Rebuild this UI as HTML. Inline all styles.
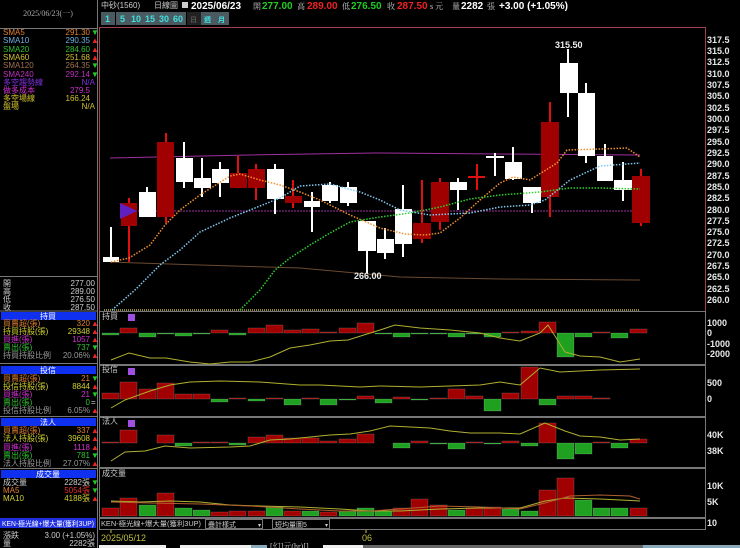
<!DOCTYPE html>
<html><head><meta charset="utf-8"><style>
html,body{margin:0;padding:0;background:#000;width:740px;height:548px;overflow:hidden}
svg{display:block}
text{font-family:"Liberation Sans","Noto Sans CJK TC",sans-serif}
.s{font-family:"Liberation Serif","Noto Serif CJK SC",serif;font-size:8px}
.ax{font-family:"Liberation Serif",serif;font-size:9px;fill:#e8e8e8;font-weight:bold}
</style></head><body>
<svg width="740" height="548" viewBox="0 0 740 548" xmlns="http://www.w3.org/2000/svg">
<rect width="740" height="548" fill="#000"/>
<line x1="97.5" y1="0" x2="97.5" y2="548" stroke="#777" stroke-width="1"/>
<line x1="0" y1="28.5" x2="97" y2="28.5" stroke="#777"/>
<text x="48" y="16" class="s" fill="#aaa" text-anchor="middle">2025/06/23(一)</text>
<g class="s">
<text x="3" y="35" fill="#e08030">SMA5</text><text x="90" y="35" fill="#e08030" text-anchor="end">291.30</text><text x="91" y="35" fill="#2c2">▼</text>
<text x="3" y="43" fill="#70b0e0">SMA10</text><text x="90" y="43" fill="#70b0e0" text-anchor="end">290.35</text><text x="91" y="43" fill="#e22">▲</text>
<text x="3" y="52" fill="#30c030">SMA20</text><text x="90" y="52" fill="#30c030" text-anchor="end">284.60</text><text x="91" y="52" fill="#e22">▲</text>
<text x="3" y="60" fill="#d0c030">SMA60</text><text x="90" y="60" fill="#d0c030" text-anchor="end">251.68</text><text x="91" y="60" fill="#e22">▲</text>
<text x="3" y="68" fill="#a07050">SMA120</text><text x="90" y="68" fill="#a07050" text-anchor="end">264.35</text><text x="91" y="68" fill="#2c2">▼</text>
<text x="3" y="77" fill="#c030c0">SMA240</text><text x="90" y="77" fill="#c030c0" text-anchor="end">292.14</text><text x="91" y="77" fill="#2c2">▼</text>
<text x="3" y="85" fill="#8030e0">多空趨勢線</text><text x="95" y="85" fill="#8030e0" text-anchor="end">N/A</text>
<text x="3" y="93" fill="#d030d0">做多成本</text><text x="90" y="93" fill="#d030d0" text-anchor="end">279.5</text>
<text x="3" y="101" fill="#d0c030">多空場線</text><text x="90" y="101" fill="#d0c030" text-anchor="end">166.24</text>
<text x="3" y="109" fill="#d0c030">盤場</text><text x="95" y="109" fill="#d0c030" text-anchor="end">N/A</text>

<line x1="0" y1="276.5" x2="97" y2="276.5" stroke="#777"/>
<text x="3" y="286" fill="#ccc">開</text><text x="95" y="286" fill="#ccc" text-anchor="end">277.00</text>
<text x="3" y="294" fill="#ccc">高</text><text x="95" y="294" fill="#ccc" text-anchor="end">289.00</text>
<text x="3" y="302" fill="#ccc">低</text><text x="95" y="302" fill="#ccc" text-anchor="end">276.50</text>
<text x="3" y="310" fill="#ccc">收</text><text x="95" y="310" fill="#ccc" text-anchor="end">287.50</text>
<line x1="0" y1="311" x2="97" y2="311" stroke="#777"/>
<rect x="1" y="312" width="95" height="8" fill="#1030f0"/><text x="48" y="319" fill="#fff" text-anchor="middle">持買</text>
<text x="3" y="326" fill="#e08030">買賣超(張)</text><text x="90" y="326" fill="#e08030" text-anchor="end">320</text><text x="91" y="326" fill="#e22">▲</text>
<text x="3" y="334" fill="#d0d030">持買持股(張)</text><text x="90" y="334" fill="#d0d030" text-anchor="end">29348</text><text x="91" y="334" fill="#e22">▲</text>
<text x="3" y="342" fill="#d030d0">買進(張)</text><text x="90" y="342" fill="#d030d0" text-anchor="end">1057</text><text x="91" y="342" fill="#e22">▲</text>
<text x="3" y="350" fill="#30c030">賣出(張)</text><text x="90" y="350" fill="#30c030" text-anchor="end">737</text><text x="91" y="350" fill="#2c2">▼</text>
<text x="3" y="358" fill="#999">持買持股比例</text><text x="90" y="358" fill="#999" text-anchor="end">20.06%</text><text x="91" y="358" fill="#e22">▲</text>
<line x1="0" y1="363.5" x2="97" y2="363.5" stroke="#777"/>
<rect x="1" y="366" width="95" height="8" fill="#1030f0"/><text x="48" y="373" fill="#fff" text-anchor="middle">投信</text>
<text x="3" y="381" fill="#e08030">買賣超(張)</text><text x="90" y="381" fill="#e08030" text-anchor="end">21</text><text x="91" y="381" fill="#2c2">▼</text>
<text x="3" y="389" fill="#d0d030">投信持股(張)</text><text x="90" y="389" fill="#d0d030" text-anchor="end">8844</text><text x="91" y="389" fill="#e22">▲</text>
<text x="3" y="397" fill="#d030d0">買進(張)</text><text x="90" y="397" fill="#d030d0" text-anchor="end">21</text><text x="91" y="397" fill="#2c2">▼</text>
<text x="3" y="405" fill="#30c030">賣出(張)</text><text x="90" y="405" fill="#30c030" text-anchor="end">0</text><text x="91" y="405" fill="#ccc">=</text>
<text x="3" y="413" fill="#999">投信持股比例</text><text x="90" y="413" fill="#999" text-anchor="end">6.05%</text><text x="91" y="413" fill="#e22">▲</text>
<line x1="0" y1="416.5" x2="97" y2="416.5" stroke="#777"/>
<rect x="1" y="418" width="95" height="8" fill="#1030f0"/><text x="48" y="425" fill="#fff" text-anchor="middle">法人</text>
<text x="3" y="433" fill="#e08030">買賣超(張)</text><text x="90" y="433" fill="#e08030" text-anchor="end">337</text><text x="91" y="433" fill="#e22">▲</text>
<text x="3" y="441" fill="#d0d030">法人持股(張)</text><text x="90" y="441" fill="#d0d030" text-anchor="end">39608</text><text x="91" y="441" fill="#e22">▲</text>
<text x="3" y="450" fill="#d030d0">買進(張)</text><text x="90" y="450" fill="#d030d0" text-anchor="end">1118</text><text x="91" y="450" fill="#e22">▲</text>
<text x="3" y="458" fill="#30c030">賣出(張)</text><text x="90" y="458" fill="#30c030" text-anchor="end">781</text><text x="91" y="458" fill="#2c2">▼</text>
<text x="3" y="466" fill="#999">法人持股比例</text><text x="90" y="466" fill="#999" text-anchor="end">27.07%</text><text x="91" y="466" fill="#e22">▲</text>
<line x1="0" y1="468.5" x2="97" y2="468.5" stroke="#777"/>
<rect x="1" y="470" width="95" height="8" fill="#1030f0"/><text x="48" y="477" fill="#fff" text-anchor="middle">成交量</text>
<text x="3" y="485" fill="#ccc">成交量</text><text x="90" y="485" fill="#ccc" text-anchor="end">2282張</text><text x="91" y="485" fill="#2c2">▼</text>
<text x="3" y="493" fill="#e08030">MA5</text><text x="90" y="493" fill="#e03030" text-anchor="end">5054張</text><text x="91" y="493" fill="#2c2">▼</text>
<text x="3" y="501" fill="#d0d030">MA10</text><text x="90" y="501" fill="#d0d030" text-anchor="end">4188張</text><text x="91" y="501" fill="#e22">▲</text>
<rect x="0" y="518" width="96" height="10" fill="#2030e0"/><text x="2" y="526" fill="#fff" font-size="7" textLength="92" lengthAdjust="spacingAndGlyphs">KEN-極光線+爆大量(獲利3UP)</text>
<text x="3" y="538" fill="#ccc">漲跌</text><text x="95" y="538" fill="#ccc" text-anchor="end">3.00 (+1.05%)</text>
<text x="3" y="546" fill="#ccc">量</text><text x="95" y="546" fill="#ccc" text-anchor="end">2282張</text>
</g>
<g class="s">
<text x="101" y="8" fill="#ccc">中砂(1560)</text>
<text x="154" y="8" fill="#ccc">日線圖</text>
<rect x="182" y="2" width="6" height="6" fill="#ccc"/>
</g>
<text x="191" y="9" fill="#fff" font-size="10" font-weight="bold">2025/06/23</text>
<text x="253" y="9" fill="#ccc" class="s">開</text><text x="262" y="9" fill="#2c2" font-size="10" font-weight="bold">277.00</text>
<text x="297" y="9" fill="#ccc" class="s">高</text><text x="307" y="9" fill="#e22" font-size="10" font-weight="bold">289.00</text>
<text x="342" y="9" fill="#ccc" class="s">低</text><text x="351" y="9" fill="#2c2" font-size="10" font-weight="bold">276.50</text>
<text x="387" y="9" fill="#ccc" class="s">收</text><text x="397" y="9" fill="#e22" font-size="10" font-weight="bold">287.50</text>
<text x="430" y="9" fill="#ccc" class="s">s 元</text>
<text x="452" y="9" fill="#ccc" class="s">量</text><text x="461" y="9" fill="#fff" font-size="10" font-weight="bold">2282</text>
<text x="487" y="9" fill="#ccc" class="s">張</text><text x="499" y="9" fill="#fff" font-size="10" font-weight="bold">+3.00 (+1.05%)</text>
<g font-size="9" fill="#40e0e0" font-family="Liberation Serif,serif" font-weight="bold">
<rect x="101" y="12" width="14" height="13" fill="#4a5a60"/><text x="105" y="22">1</text>
<rect x="116" y="12" width="14" height="13" fill="#4a5a60"/><text x="120" y="22">5</text>
<rect x="130" y="12" width="14" height="13" fill="#4a5a60"/><text x="131" y="22">10</text>
<rect x="144" y="12" width="14" height="13" fill="#4a5a60"/><text x="145" y="22">15</text>
<rect x="158" y="12" width="14" height="13" fill="#4a5a60"/><text x="159" y="22">30</text>
<rect x="172" y="12" width="14" height="13" fill="#4a5a60"/><text x="173" y="22">60</text>
<rect x="187" y="12" width="14" height="13" fill="#222"/><text x="190" y="22" fill="#555" font-size="7">日</text>
<rect x="201" y="12" width="14" height="13" fill="#4a5a60"/><text x="204" y="22" font-size="7">週</text>
<rect x="215" y="12" width="14" height="13" fill="#4a5a60"/><text x="218" y="22" font-size="7">月</text>
</g>
<rect x="99.5" y="27.5" width="606" height="284" fill="none" stroke="#a04050"/>
<g class="ax">
<text x="707" y="43">317.5</text><text x="707" y="54">315.0</text><text x="707" y="65">312.5</text><text x="707" y="77">310.0</text><text x="707" y="88">307.5</text><text x="707" y="99">305.0</text><text x="707" y="111">302.5</text><text x="707" y="122">300.0</text><text x="707" y="133">297.5</text><text x="707" y="145">295.0</text><text x="707" y="156">292.5</text><text x="707" y="167">290.0</text><text x="707" y="179">287.5</text><text x="707" y="190">285.0</text><text x="707" y="201">282.5</text><text x="707" y="213">280.0</text><text x="707" y="224">277.5</text><text x="707" y="235">275.0</text><text x="707" y="246">272.5</text><text x="707" y="258">270.0</text><text x="707" y="269">267.5</text><text x="707" y="280">265.0</text><text x="707" y="292">262.5</text><text x="707" y="303">260.0</text>
</g>
<polyline points="110,158 250,155 375,153 500,154 640,155" fill="none" stroke="#a030a0" stroke-width="1"/>
<line x1="120" y1="211" x2="640" y2="211" stroke="#a030a0" stroke-width="1" stroke-dasharray="2,1"/>
<polyline points="110,262 200,265 300,268 400,277 500,279 640,280" fill="none" stroke="#6a4a30" stroke-width="1"/>
<line x1="104" y1="310" x2="640" y2="310" stroke="#c0b040" stroke-width="1.5" stroke-dasharray="1,1"/>
<g stroke-width="2">
<line x1="111" y1="227" x2="111" y2="262" stroke="#fff"/><rect x="103" y="257" width="16" height="5" fill="#fff"/>
<line x1="129" y1="198" x2="129" y2="262" stroke="#e01010"/><rect x="121" y="203" width="16" height="23" fill="#a00000"/>
<line x1="147" y1="187" x2="147" y2="217" stroke="#fff"/><rect x="139" y="192" width="17" height="25" fill="#fff"/>
<line x1="166" y1="133" x2="166" y2="223" stroke="#e01010"/><rect x="157" y="142" width="17" height="75" fill="#a00000"/>
<line x1="184" y1="142" x2="184" y2="188" stroke="#fff"/><rect x="176" y="158" width="17" height="24" fill="#fff"/>
<line x1="202" y1="158" x2="202" y2="197" stroke="#fff"/><rect x="194" y="178" width="17" height="10" fill="#fff"/>
<line x1="220" y1="162" x2="220" y2="197" stroke="#fff"/><rect x="212" y="169" width="17" height="14" fill="#fff"/>
<line x1="238" y1="156" x2="238" y2="188" stroke="#e01010"/><rect x="230" y="173" width="17" height="15" fill="#a00000"/>
<line x1="256" y1="164" x2="256" y2="200" stroke="#e01010"/><rect x="248" y="169" width="17" height="19" fill="#a00000"/>
<line x1="275" y1="164" x2="275" y2="214" stroke="#fff"/><rect x="267" y="169" width="17" height="30" fill="#fff"/>
<line x1="293" y1="180" x2="293" y2="208" stroke="#e01010"/><rect x="285" y="196" width="17" height="7" fill="#a00000"/>
<line x1="312" y1="192" x2="312" y2="232" stroke="#fff"/><rect x="304" y="201" width="16" height="6" fill="#fff"/>
<line x1="330" y1="182" x2="330" y2="203" stroke="#fff"/><rect x="322" y="185" width="16" height="16" fill="#fff"/>
<line x1="348" y1="182" x2="348" y2="206" stroke="#fff"/><rect x="340" y="187" width="17" height="16" fill="#fff"/>
<line x1="367" y1="221" x2="367" y2="273" stroke="#fff"/><rect x="358" y="221" width="18" height="30" fill="#fff"/>
<line x1="385" y1="228" x2="385" y2="259" stroke="#fff"/><rect x="377" y="239" width="17" height="14" fill="#fff"/>
<line x1="403" y1="185" x2="403" y2="257" stroke="#fff"/><rect x="395" y="209" width="17" height="35" fill="#fff"/>
<line x1="422" y1="180" x2="422" y2="243" stroke="#e01010"/><rect x="413" y="223" width="18" height="16" fill="#a00000"/>
<line x1="440" y1="178" x2="440" y2="230" stroke="#e01010"/><rect x="431" y="182" width="18" height="40" fill="#a00000"/>
<line x1="458" y1="178" x2="458" y2="210" stroke="#fff"/><rect x="450" y="182" width="17" height="8" fill="#fff"/>
<line x1="477" y1="164" x2="477" y2="190" stroke="#e01010"/><rect x="468" y="176" width="17" height="2" fill="#e01010"/>
<line x1="495" y1="153" x2="495" y2="176" stroke="#fff"/><rect x="486" y="156" width="18" height="2" fill="#fff"/>
<line x1="513" y1="147" x2="513" y2="180" stroke="#fff"/><rect x="505" y="162" width="17" height="17" fill="#fff"/>
<line x1="532" y1="187" x2="532" y2="213" stroke="#fff"/><rect x="523" y="187" width="18" height="16" fill="#fff"/>
<line x1="550" y1="102" x2="550" y2="217" stroke="#e01010"/><rect x="541" y="122" width="18" height="75" fill="#a00000"/>
<line x1="568" y1="49" x2="568" y2="117" stroke="#fff"/><rect x="560" y="63" width="18" height="30" fill="#fff"/>
<line x1="586" y1="83" x2="586" y2="163" stroke="#fff"/><rect x="578" y="93" width="17" height="63" fill="#fff"/>
<line x1="605" y1="144" x2="605" y2="181" stroke="#fff"/><rect x="597" y="156" width="16" height="25" fill="#fff"/>
<line x1="623" y1="162" x2="623" y2="201" stroke="#fff"/><rect x="614" y="180" width="18" height="10" fill="#fff"/>
<line x1="641" y1="169" x2="641" y2="226" stroke="#e01010"/><rect x="632" y="176" width="18" height="47" fill="#a00000"/>
</g>
<polygon points="120,203 120,219 137,211" fill="#6020c0"/>
<text x="555" y="48" fill="#eee" font-size="9" font-family="Liberation Sans,sans-serif" font-weight="bold">315.50</text>
<text x="354" y="279" fill="#eee" font-size="9" font-family="Liberation Sans,sans-serif" font-weight="bold">266.00</text>
<polyline points="111,262 129,258 150,245 165,225 180,210 200,195 230,176 240,174 260,180 280,185 300,192 320,200 350,215 380,228 405,234 425,235 440,233 460,218 480,200 500,183 513,177 530,180 557,163 567,150 600,149 627,148 640,157" fill="none" stroke="#f09030" stroke-width="1.5" stroke-dasharray="1.5,1.5"/>
<polyline points="112,310 135,290 160,265 180,250 200,232 230,218 250,210 280,198 300,186 330,184 360,192 380,200 400,210 430,215 470,213 500,207 530,205 545,200 570,180 600,166 640,163" fill="none" stroke="#80c8f0" stroke-width="1.5" stroke-dasharray="1.5,1.5"/>
<polyline points="240,310 260,290 275,270 290,258 310,245 330,233 350,222 380,217 410,213 440,207 470,199 500,195 540,192 570,188 600,188 640,189" fill="none" stroke="#30d030" stroke-width="1.5" stroke-dasharray="1.5,1.5"/>
<g fill="none" stroke="#777">
<rect x="99.5" y="311.5" width="606" height="53"/>
<rect x="99.5" y="365.5" width="606" height="51"/>
<rect x="99.5" y="417.5" width="606" height="50"/>
<rect x="99.5" y="468.5" width="606" height="49"/>
<rect x="99.5" y="518.5" width="606" height="11"/>
</g>
<g class="s" fill="#ccc">
<text x="102" y="319">持買</text><text x="102" y="372">投信</text><text x="102" y="424">法人</text><text x="102" y="476">成交量</text>
</g>
<rect x="128" y="314" width="7" height="7" fill="#a050e0"/>
<rect x="128" y="368" width="7" height="7" fill="#a050e0"/>
<rect x="128" y="420" width="7" height="7" fill="#a050e0"/>
<g class="ax">
<text x="707" y="326">1000</text><text x="707" y="336">0</text><text x="707" y="347">-1000</text><text x="707" y="357">-2000</text>
<text x="707" y="386">500</text><text x="707" y="402">0</text>
<text x="707" y="438">40K</text><text x="707" y="454">38K</text>
<text x="707" y="489">10K</text><text x="707" y="505">5K</text>
<text x="707" y="526">10</text>
</g>
<g stroke="#fff" stroke-opacity="0.15">
<rect x="102" y="333" width="17" height="2" fill="#20a020"/>
<rect x="120" y="328" width="17" height="5" fill="#a00000"/>
<rect x="139" y="333" width="17" height="4" fill="#20a020"/>
<rect x="157" y="333" width="17" height="1" fill="#20a020"/>
<rect x="175" y="333" width="17" height="3" fill="#20a020"/>
<rect x="193" y="333" width="17" height="1" fill="#20a020"/>
<rect x="211" y="330" width="17" height="3" fill="#a00000"/>
<rect x="229" y="333" width="17" height="2" fill="#20a020"/>
<rect x="248" y="328" width="17" height="5" fill="#a00000"/>
<rect x="266" y="325" width="17" height="8" fill="#a00000"/>
<rect x="284" y="330" width="17" height="3" fill="#a00000"/>
<rect x="302" y="329" width="17" height="4" fill="#a00000"/>
<rect x="320" y="332" width="17" height="1" fill="#a00000"/>
<rect x="339" y="328" width="17" height="5" fill="#a00000"/>
<rect x="357" y="323" width="17" height="10" fill="#a00000"/>
<rect x="375" y="333" width="17" height="1" fill="#20a020"/>
<rect x="393" y="333" width="17" height="4" fill="#20a020"/>
<rect x="411" y="333" width="17" height="1" fill="#20a020"/>
<rect x="430" y="333" width="17" height="1" fill="#20a020"/>
<rect x="448" y="333" width="17" height="4" fill="#20a020"/>
<rect x="466" y="333" width="17" height="1" fill="#20a020"/>
<rect x="484" y="333" width="17" height="4" fill="#20a020"/>
<rect x="502" y="332" width="17" height="1" fill="#a00000"/>
<rect x="521" y="331" width="17" height="2" fill="#a00000"/>
<rect x="539" y="322" width="17" height="11" fill="#a00000"/>
<rect x="557" y="333" width="17" height="24" fill="#20a020"/>
<rect x="575" y="333" width="17" height="4" fill="#20a020"/>
<rect x="593" y="332" width="17" height="1" fill="#a00000"/>
<rect x="611" y="333" width="17" height="5" fill="#20a020"/>
<rect x="630" y="329" width="17" height="4" fill="#a00000"/>
</g>
<polyline points="111,360 129,353 150,358 166,358 190,362 210,364 230,362 250,362 270,357 290,348 310,345 330,341 348,340 367,334 380,330 395,325 420,328 450,330 480,333 500,338 520,341 540,333 548,325 565,352 580,356 600,357 620,362 640,359" fill="none" stroke="#b0b030" stroke-width="1"/>
<g stroke="#fff" stroke-opacity="0.15">
<rect x="102" y="393" width="17" height="6" fill="#a00000"/>
<rect x="120" y="382" width="17" height="17" fill="#a00000"/>
<rect x="139" y="389" width="17" height="10" fill="#a00000"/>
<rect x="157" y="383" width="17" height="16" fill="#a00000"/>
<rect x="175" y="394" width="17" height="5" fill="#a00000"/>
<rect x="193" y="394" width="17" height="5" fill="#a00000"/>
<rect x="211" y="399" width="17" height="3" fill="#20a020"/>
<rect x="229" y="398" width="17" height="1" fill="#a00000"/>
<rect x="248" y="399" width="17" height="2" fill="#20a020"/>
<rect x="266" y="398" width="17" height="1" fill="#a00000"/>
<rect x="284" y="399" width="17" height="6" fill="#20a020"/>
<rect x="302" y="398" width="17" height="1" fill="#a00000"/>
<rect x="320" y="399" width="17" height="6" fill="#20a020"/>
<rect x="339" y="399" width="17" height="1" fill="#20a020"/>
<rect x="357" y="396" width="17" height="3" fill="#a00000"/>
<rect x="375" y="399" width="17" height="4" fill="#20a020"/>
<rect x="393" y="397" width="17" height="2" fill="#a00000"/>
<rect x="411" y="399" width="17" height="1" fill="#20a020"/>
<rect x="430" y="398" width="17" height="1" fill="#a00000"/>
<rect x="448" y="389" width="17" height="10" fill="#a00000"/>
<rect x="466" y="396" width="17" height="3" fill="#a00000"/>
<rect x="484" y="399" width="17" height="12" fill="#20a020"/>
<rect x="502" y="393" width="17" height="6" fill="#a00000"/>
<rect x="521" y="367" width="17" height="32" fill="#a00000"/>
<rect x="539" y="399" width="17" height="6" fill="#20a020"/>
<rect x="557" y="396" width="17" height="3" fill="#a00000"/>
<rect x="575" y="396" width="17" height="3" fill="#a00000"/>
<rect x="593" y="398" width="17" height="1" fill="#a00000"/>
</g>
<polyline points="111,408 125,400 150,391 170,385 190,382 220,381 260,382 300,385 320,385 360,387 380,386 420,387 480,385 500,382 520,385 540,368 560,372 600,370 640,369" fill="none" stroke="#b0b030" stroke-width="1"/>
<g stroke="#fff" stroke-opacity="0.15">
<rect x="102" y="442" width="17" height="1" fill="#a00000"/>
<rect x="120" y="430" width="17" height="13" fill="#a00000"/>
<rect x="157" y="435" width="17" height="8" fill="#a00000"/>
<rect x="175" y="443" width="17" height="3" fill="#20a020"/>
<rect x="193" y="442" width="17" height="1" fill="#a00000"/>
<rect x="211" y="442" width="17" height="1" fill="#a00000"/>
<rect x="229" y="443" width="17" height="2" fill="#20a020"/>
<rect x="248" y="437" width="17" height="6" fill="#a00000"/>
<rect x="266" y="435" width="17" height="8" fill="#a00000"/>
<rect x="284" y="438" width="17" height="5" fill="#a00000"/>
<rect x="302" y="438" width="17" height="5" fill="#a00000"/>
<rect x="320" y="441" width="17" height="2" fill="#a00000"/>
<rect x="339" y="439" width="17" height="4" fill="#a00000"/>
<rect x="357" y="434" width="17" height="9" fill="#a00000"/>
<rect x="393" y="443" width="17" height="5" fill="#20a020"/>
<rect x="411" y="441" width="17" height="2" fill="#a00000"/>
<rect x="430" y="443" width="17" height="1" fill="#20a020"/>
<rect x="448" y="443" width="17" height="6" fill="#20a020"/>
<rect x="466" y="442" width="17" height="1" fill="#a00000"/>
<rect x="484" y="443" width="17" height="1" fill="#20a020"/>
<rect x="502" y="441" width="17" height="2" fill="#a00000"/>
<rect x="521" y="443" width="17" height="3" fill="#20a020"/>
<rect x="539" y="423" width="17" height="20" fill="#a00000"/>
<rect x="557" y="443" width="17" height="16" fill="#20a020"/>
<rect x="575" y="443" width="17" height="11" fill="#20a020"/>
<rect x="593" y="442" width="17" height="1" fill="#a00000"/>
<rect x="611" y="443" width="17" height="5" fill="#20a020"/>
<rect x="630" y="439" width="17" height="4" fill="#a00000"/>
</g>
<polyline points="111,461 125,452 145,451 165,446 190,448 230,447 250,446 270,440 290,439 310,437 330,435 350,434 370,431 390,426 410,427 430,428 450,431 470,433 500,433 520,434 545,423 565,431 580,436 600,437 620,440 640,439" fill="none" stroke="#b0b030" stroke-width="1"/>
<g stroke="#fff" stroke-opacity="0.15">
<rect x="102" y="508" width="17" height="8" fill="#a00000"/>
<rect x="120" y="498" width="17" height="18" fill="#a00000"/>
<rect x="139" y="505" width="17" height="11" fill="#20a020"/>
<rect x="157" y="493" width="17" height="23" fill="#a00000"/>
<rect x="175" y="508" width="17" height="8" fill="#20a020"/>
<rect x="193" y="510" width="17" height="6" fill="#20a020"/>
<rect x="211" y="512" width="17" height="4" fill="#a00000"/>
<rect x="229" y="511" width="17" height="5" fill="#a00000"/>
<rect x="248" y="511" width="17" height="5" fill="#a00000"/>
<rect x="266" y="507" width="17" height="9" fill="#20a020"/>
<rect x="284" y="511" width="17" height="5" fill="#a00000"/>
<rect x="302" y="511" width="17" height="5" fill="#20a020"/>
<rect x="320" y="512" width="17" height="4" fill="#a00000"/>
<rect x="339" y="511" width="17" height="5" fill="#20a020"/>
<rect x="357" y="508" width="17" height="8" fill="#20a020"/>
<rect x="375" y="511" width="17" height="5" fill="#20a020"/>
<rect x="393" y="508" width="17" height="8" fill="#a00000"/>
<rect x="411" y="499" width="17" height="17" fill="#a00000"/>
<rect x="430" y="505" width="17" height="11" fill="#a00000"/>
<rect x="448" y="510" width="17" height="6" fill="#20a020"/>
<rect x="466" y="508" width="17" height="8" fill="#a00000"/>
<rect x="484" y="507" width="17" height="9" fill="#a00000"/>
<rect x="502" y="509" width="17" height="7" fill="#20a020"/>
<rect x="521" y="511" width="17" height="5" fill="#20a020"/>
<rect x="539" y="490" width="17" height="26" fill="#a00000"/>
<rect x="557" y="478" width="17" height="38" fill="#a00000"/>
<rect x="575" y="500" width="17" height="16" fill="#20a020"/>
<rect x="593" y="508" width="17" height="8" fill="#20a020"/>
<rect x="611" y="508" width="17" height="8" fill="#20a020"/>
<rect x="630" y="508" width="17" height="8" fill="#a00000"/>
</g>
<polyline points="111,501 140,502 170,501 200,502 230,505 260,506 300,507 340,509 370,511 400,511 440,509 480,508 520,508 545,501 565,498 600,499 640,501" fill="none" stroke="#b0b030" stroke-width="1"/>
<polyline points="111,502 150,503 200,504 250,506 300,509 340,511 370,511 400,509 440,506 480,507 520,509 545,503 570,496 600,495 630,496 640,499" fill="none" stroke="#b06030" stroke-width="1"/>
<g class="s">
<text x="101" y="526" fill="#ccc" font-size="7" textLength="100" lengthAdjust="spacingAndGlyphs">KEN-極光線+爆大量(獲利3UP)</text>
<rect x="205.5" y="519.5" width="57" height="9" fill="#000" stroke="#777"/><text x="208" y="527" fill="#ccc" font-size="7">疊計樣式</text><text x="258" y="527" fill="#ccc" font-size="6">▾</text>
<rect x="272.5" y="519.5" width="57" height="9" fill="#000" stroke="#777"/><text x="275" y="527" fill="#ccc" font-size="7">短均量圖5</text><text x="325" y="527" fill="#ccc" font-size="6">▾</text>
</g>
<line x1="111" y1="530" x2="111" y2="533" stroke="#c0c040"/>
<line x1="366" y1="530" x2="366" y2="533" stroke="#c0c040"/>
<text x="101" y="541" fill="#c0c040" font-size="9" font-family="Liberation Serif,serif">2025/05/12</text>
<text x="362" y="541" fill="#c0c040" font-size="9" font-family="Liberation Serif,serif">06</text>
<rect x="99" y="545" width="67" height="3" fill="#eee"/>
<rect x="180" y="545" width="71" height="3" fill="#eee"/>
<rect x="251" y="545" width="16" height="3" fill="#8ab"/>
<text x="270" y="549" fill="#ccc" class="s">[幻]元(hr)[]</text>
<rect x="323" y="545" width="40" height="3" fill="#eee"/>
<rect x="363" y="545" width="280" height="3" fill="#666"/>
<rect x="643" y="545" width="97" height="3" fill="#8ab"/>
</svg>
</body></html>
